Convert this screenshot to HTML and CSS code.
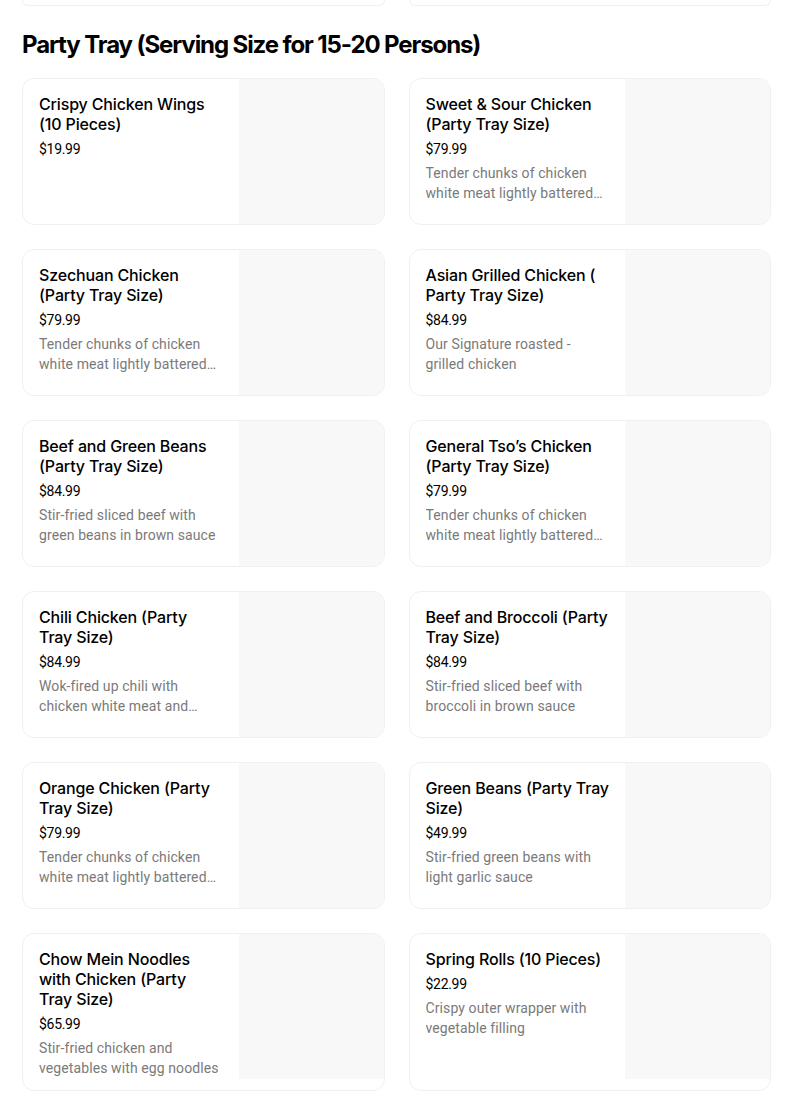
FILE: index.html
```html
<!DOCTYPE html>
<html lang="en">
<head>
<meta charset="utf-8">
<title>Party Tray</title>
<link rel="stylesheet" href="styles.css">
</head>
<body>
<main class="page">
  <div class="grid prev">
    <div class="tail"></div>
    <div class="tail"></div>
  </div>
  <h2 class="section-title">Party Tray (Serving Size for 15-20 Persons)</h2>
  <div class="grid">
    <div class="card">
      <div class="info">
        <div class="name">Crispy Chicken Wings (10 Pieces)</div>
        <div class="price">$19.99</div>
      </div>
      <div class="thumb"></div>
    </div>
    <div class="card">
      <div class="info">
        <div class="name">Sweet &amp; Sour Chicken (Party Tray Size)</div>
        <div class="price">$79.99</div>
        <div class="desc">Tender chunks of chicken white meat lightly battered and wok-tossed in sweet and sour sauce</div>
      </div>
      <div class="thumb"></div>
    </div>
    <div class="card">
      <div class="info">
        <div class="name">Szechuan Chicken (Party Tray Size)</div>
        <div class="price">$79.99</div>
        <div class="desc">Tender chunks of chicken white meat lightly battered and wok-tossed in spicy Szechuan sauce</div>
      </div>
      <div class="thumb"></div>
    </div>
    <div class="card">
      <div class="info">
        <div class="name">Asian Grilled Chicken ( Party Tray Size)</div>
        <div class="price">$84.99</div>
        <div class="desc">Our Signature roasted - grilled chicken</div>
      </div>
      <div class="thumb"></div>
    </div>
    <div class="card">
      <div class="info">
        <div class="name">Beef and Green Beans (Party Tray Size)</div>
        <div class="price">$84.99</div>
        <div class="desc">Stir-fried sliced beef with green beans in brown sauce</div>
      </div>
      <div class="thumb"></div>
    </div>
    <div class="card">
      <div class="info">
        <div class="name">General Tso’s Chicken (Party Tray Size)</div>
        <div class="price">$79.99</div>
        <div class="desc">Tender chunks of chicken white meat lightly battered and wok-tossed in General Tso’s sauce</div>
      </div>
      <div class="thumb"></div>
    </div>
    <div class="card">
      <div class="info">
        <div class="name">Chili Chicken (Party Tray Size)</div>
        <div class="price">$84.99</div>
        <div class="desc">Wok-fired up chili with chicken white meat and vegetables in a spicy sauce</div>
      </div>
      <div class="thumb"></div>
    </div>
    <div class="card">
      <div class="info">
        <div class="name">Beef and Broccoli (Party Tray Size)</div>
        <div class="price">$84.99</div>
        <div class="desc">Stir-fried sliced beef with broccoli in brown sauce</div>
      </div>
      <div class="thumb"></div>
    </div>
    <div class="card">
      <div class="info">
        <div class="name">Orange Chicken (Party Tray Size)</div>
        <div class="price">$79.99</div>
        <div class="desc">Tender chunks of chicken white meat lightly battered and wok-tossed in orange sauce</div>
      </div>
      <div class="thumb"></div>
    </div>
    <div class="card">
      <div class="info">
        <div class="name">Green Beans (Party Tray Size)</div>
        <div class="price">$49.99</div>
        <div class="desc">Stir-fried green beans with light garlic sauce</div>
      </div>
      <div class="thumb"></div>
    </div>
    <div class="card">
      <div class="info">
        <div class="name">Chow Mein Noodles with Chicken (Party Tray Size)</div>
        <div class="price">$65.99</div>
        <div class="desc">Stir-fried chicken and vegetables with egg noodles</div>
      </div>
      <div class="thumb"></div>
    </div>
    <div class="card">
      <div class="info">
        <div class="name">Spring Rolls (10 Pieces)</div>
        <div class="price">$22.99</div>
        <div class="desc">Crispy outer wrapper with vegetable filling</div>
      </div>
      <div class="thumb"></div>
    </div>
  </div>
</main>
</body>
</html>
```

FILE: styles.css
```css
* { box-sizing: border-box; }
html, body { margin: 0; padding: 0; background: #ffffff; }
body {
  font-family: Inter, "Noto Sans", "Liberation Sans", sans-serif;
  color: #000000;
}
.page {
  width: 749px;
  margin-left: 22px;
  padding-bottom: 24px;
}
.grid {
  display: grid;
  grid-template-columns: 1fr 1fr;
  gap: 24px;
}
.tail {
  height: 6px;
  border: 1px solid #f0f0f0;
  border-top: none;
  border-radius: 0 0 12px 12px;
}
.section-title {
  margin: 23px 0 17px;
  font-size: 24px;
  line-height: 32px;
  font-weight: 700;
  letter-spacing: -1.1px;
}
.card {
  display: flex;
  align-items: flex-start;
  border: 1px solid #f0f0f0;
  border-radius: 12px;
  overflow: hidden;
  min-height: 147px;
}
.info {
  flex: 1;
  min-width: 0;
  padding: 15px 16px 12px;
}
.name {
  font-size: 16px;
  line-height: 20px;
  font-weight: 500;
  letter-spacing: -0.15px;
}
.price {
  margin-top: 5px;
  font-family: Roboto, "Liberation Sans", sans-serif;
  font-size: 14px;
  line-height: 20px;
  letter-spacing: -0.3px;
}
.desc {
  margin-top: 4px;
  font-family: Roboto, "Liberation Sans", sans-serif;
  font-size: 14px;
  line-height: 20px;
  letter-spacing: 0.1px;
  color: #7a7a7a;
  display: -webkit-box;
  -webkit-line-clamp: 2;
  -webkit-box-orient: vertical;
  overflow: hidden;
}
.thumb {
  flex: 0 0 145px;
  width: 145px;
  height: 145px;
  background: #f8f8f8;
}
```
